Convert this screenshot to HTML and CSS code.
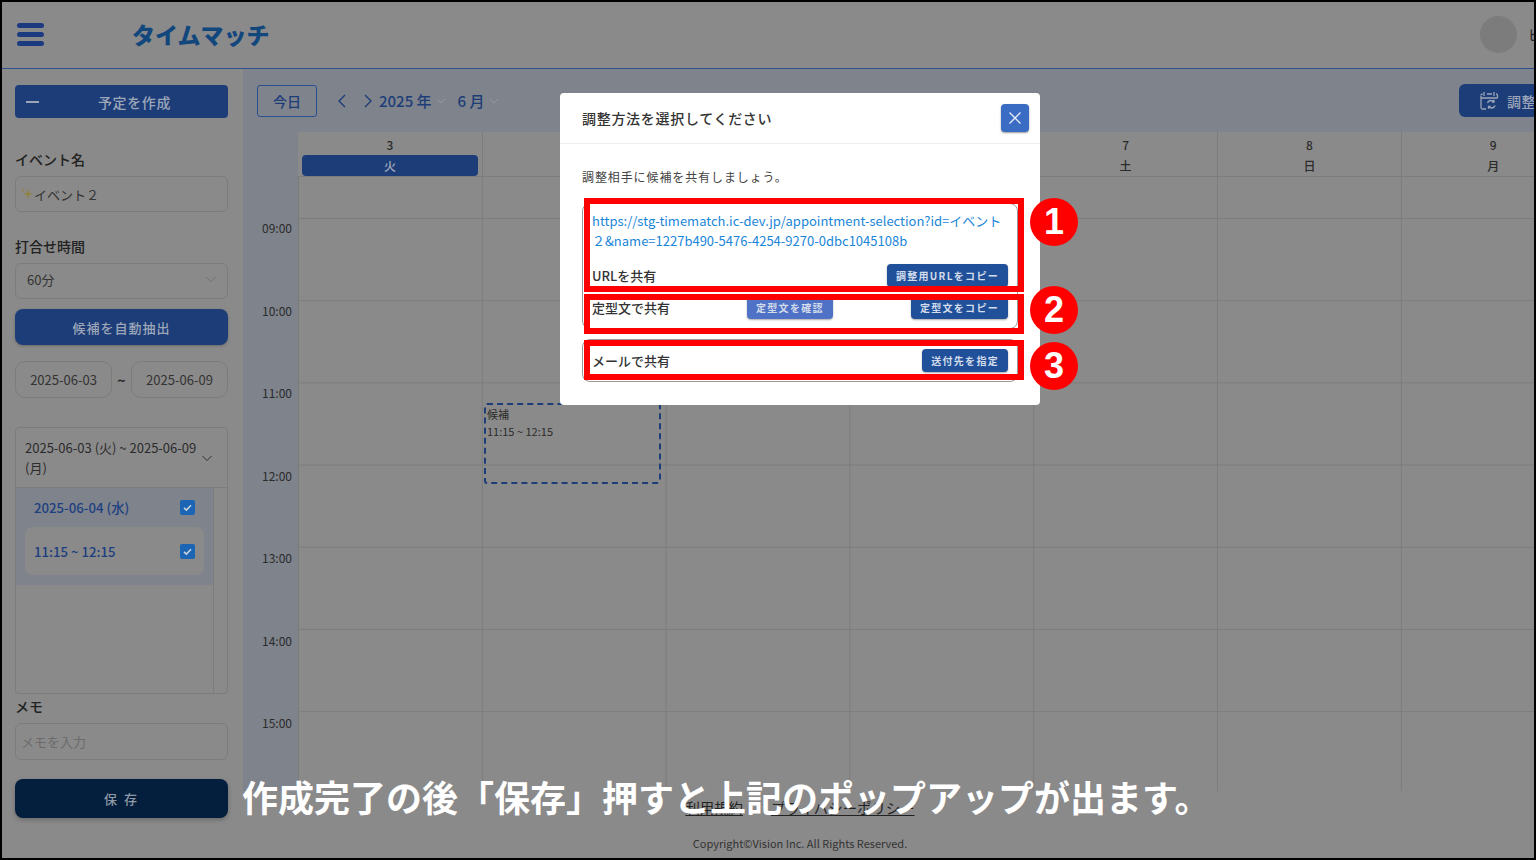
FILE: index.html
```html
<!DOCTYPE html>
<html lang="ja">
<head>
    <meta charset="utf-8">
    <title>タイムマッチ</title>
    <link rel="stylesheet" href="styles.css">
</head>
<body>
<div class="frame">
    <header class="topbar">
        <div class="burger"><span></span><span></span><span></span></div>
        <div class="logo">タイムマッチ</div>
        <div class="user"><div class="avatar"></div><span>ビジョン</span></div>
    </header>

    <div class="content">
        <aside class="sidebar">
            <button class="btn create"><span class="dash"></span>予定を作成</button>

            <label class="label first">イベント名</label>
            <div class="field event-name">
                <svg class="sparkle" width="14" height="14" viewBox="0 0 14 14"><path d="M8 2l1.200 3.800L13 7 9.200 8.200 8 12 6.800 8.200 3 7l3.800-1.200z" fill="#8f8346"/><path d="M3 1l.6 1.400L5 3l-1.400.6L3 5l-.6-1.400L1 3l1.400-.6z" fill="#8f8346"/></svg>
                イベント２
            </div>

            <label class="label second">打合せ時間</label>
            <div class="field select">60分
                <svg width="12" height="12" viewBox="0 0 12 12"><path d="M1.500 4l4.500 4.500L10.500 4" fill="none" stroke="#6f6f6f"/></svg>
            </div>

            <button class="btn auto">候補を自動抽出</button>

            <div class="range">
                <div class="field date">2025-06-03</div>
                <span class="tilde">~</span>
                <div class="field date">2025-06-09</div>
            </div>

            <div class="accordion">
                <div class="acc-head">
                    <span>2025-06-03 (火) ~ 2025-06-09 (月)</span>
                    <svg width="12" height="12" viewBox="0 0 12 12"><path d="M1.500 4l4.500 4.500L10.500 4" fill="none" stroke="#333"/></svg>
                </div>
                <div class="acc-body">
                    <div class="acc-list">
                        <div class="acc-day">
                            <div class="acc-row day-row">2025-06-04 (水)
                                <svg class="check" width="15" height="15" viewBox="0 0 15 15"><rect width="15" height="15" rx="2" fill="#1c65b5"/><path d="M4 7.800l2.400 2.300L11 5.200" fill="none" stroke="#c9d2dc" stroke-width="1.600"/></svg>
                            </div>
                            <div class="acc-row slot-row">11:15 ~ 12:15
                                <svg class="check" width="15" height="15" viewBox="0 0 15 15"><rect width="15" height="15" rx="2" fill="#1c65b5"/><path d="M4 7.800l2.400 2.300L11 5.200" fill="none" stroke="#c9d2dc" stroke-width="1.600"/></svg>
                            </div>
                        </div>
                    </div>
                    <div class="acc-scroll"></div>
                </div>
            </div>

            <label class="label memo-label">メモ</label>
            <div class="field memo">メモを入力</div>

            <button class="btn save">保 存</button>
        </aside>

        <main class="main">
            <div class="toolbar">
                <button class="today">今日</button>
                <svg class="arrow" width="12" height="16" viewBox="0 0 12 16"><path d="M9 2L3 8l6 6" fill="none" stroke="#1d3d78" stroke-width="1.400"/></svg>
                <svg class="arrow next" width="12" height="16" viewBox="0 0 12 16"><path d="M3 2l6 6-6 6" fill="none" stroke="#1d3d78" stroke-width="1.400"/></svg>
                <span class="ym">2025 年</span>
                <svg class="caret" width="10" height="10" viewBox="0 0 10 10"><path d="M1 3l4 4 4-4" fill="none" stroke="#8e98a8"/></svg>
                <span class="ym month">6 月</span>
                <svg class="caret" width="10" height="10" viewBox="0 0 10 10"><path d="M1 3l4 4 4-4" fill="none" stroke="#8e98a8"/></svg>
                <button class="btn adjust">
                    <svg width="20" height="20" viewBox="0 0 20 20" fill="none" stroke="#9aa5b8" stroke-width="1.300"><path d="M8 3h5M5 1v4M15 1v4M2 4.500C2 3.500 2.500 3 3.500 3M17 3c1 0 1.500.5 1.500 1.500V7M2 5v11.500c0 1 .5 1.500 1.500 1.500H7M2 7h16.500M8.500 12c.5-1.500 2-2.500 3.500-2.500 1.300 0 2.200.5 3 1.500M15 8.800V11h-2.200M16 14.500c-.5 1.500-2 2.500-3.500 2.500-1.300 0-2.200-.5-3-1.500M9.500 17.700v-2.200h2.200"/></svg>
                    調整方法
                </button>
            </div>

            <div class="week-head">
                <div class="corner"></div>
                <div class="day today-col"><span>3</span><b class="pill">火</b></div>
                <div class="day"><span>4</span><b>水</b></div>
                <div class="day"><span>5</span><b>木</b></div>
                <div class="day"><span>6</span><b>金</b></div>
                <div class="day"><span>7</span><b>土</b></div>
                <div class="day"><span>8</span><b>日</b></div>
                <div class="day"><span>9</span><b>月</b></div>
            </div>

            <div class="week-body">
                <div class="times">
                    <div class="time">09:00</div>
                    <div class="time">10:00</div>
                    <div class="time">11:00</div>
                    <div class="time">12:00</div>
                    <div class="time">13:00</div>
                    <div class="time">14:00</div>
                    <div class="time">15:00</div>
                </div>
                <div class="slots">
                    <div class="candidate">候補<br>11:15 ~ 12:15</div>
                </div>
            </div>

            <footer class="footer">
                <div class="links"><a>利用規約</a><a>プライバシーポリシー</a></div>
                <div class="copy">Copyright©Vision Inc. All Rights Reserved.</div>
            </footer>
        </main>
    </div>

    <div class="overlay">
        <div class="modal">
            <div class="modal-head">
                <h2>調整方法を選択してください</h2>
                <button class="close">
                    <svg width="14" height="14" viewBox="0 0 14 14"><path d="M1.500 1.500l11 11M12.500 1.500l-11 11" stroke="#e6ecf7" stroke-width="1.300"/></svg>
                </button>
            </div>
            <div class="modal-body">
                <p class="lead">調整相手に候補を共有しましょう。</p>
                <div class="share-group">
                    <div class="card card-url">
                        <div class="url">https://stg-timematch.ic-dev.jp/appointment-selection?id=イベント２&amp;name=1227b490-5476-4254-9270-0dbc1045108b</div>
                        <div class="card-row">
                            <span>URLを共有</span>
                            <button class="mini">調整用URLをコピー</button>
                        </div>
                    </div>
                    <div class="card card-text">
                        <div class="card-row">
                            <span>定型文で共有</span>
                            <button class="mini light">定型文を確認</button>
                            <button class="mini">定型文をコピー</button>
                        </div>
                    </div>
                </div>
                <div class="card card-mail">
                    <div class="card-row">
                        <span>メールで共有</span>
                        <button class="mini">送付先を指定</button>
                    </div>
                </div>
            </div>
            <div class="mark box1"></div>
            <div class="mark box2"></div>
            <div class="mark box3"></div>
            <div class="num num1">1</div>
            <div class="num num2">2</div>
            <div class="num num3">3</div>
        </div>
    </div>

    <div class="caption">作成完了の後「保存」押すと上記のポップアップが出ます。</div>
</div>
</body>
</html>
```

FILE: styles.css
```css
* {
    box-sizing: border-box;
}

html, body {
    margin: 0;
    height: 100%;
}

body {
    font-family: "Noto Sans CJK JP", "Noto Sans", sans-serif;
    color: #2b2b2b;
    background-color: #000;
    overflow: hidden;
}

button {
    font-family: inherit;
    border: none;
    padding: 0;
}

.frame {
    position: relative;
    width: 1536px;
    height: 860px;
    border: 2px solid #000;
    background-color: #8a8a8a;
    overflow: hidden;
}

/* top bar */
.topbar {
    display: flex;
    align-items: center;
    height: 67px;
    border-bottom: 1px solid #2f4f8f;
    padding-left: 15px;
    padding-bottom: 2px;
}

.burger {
    display: flex;
    flex-direction: column;
    gap: 4px;
    width: 27px;
}

.burger span {
    height: 5px;
    border-radius: 3px;
    background-color: #1c3a80;
}

.logo {
    margin-left: 88px;
    font-size: 23px;
    font-weight: 900;
    color: #12477e;
}

.user {
    display: flex;
    align-items: center;
    gap: 11px;
    margin-left: auto;
    margin-right: -50px;
    font-size: 14px;
    color: #222;
    white-space: nowrap;
}

.avatar {
    width: 37px;
    height: 37px;
    border-radius: 50%;
    background-color: #7c7c7c;
}

.content {
    display: flex;
    height: 789px;
}

/* left column */
.sidebar {
    flex: 0 0 241px;
    padding: 16px 15px 0 13px;
}

.btn {
    display: block;
    position: relative;
    width: 100%;
    color: #9ca6b8;
    background-color: #1d3d78;
    font-size: 14px;
    font-weight: 500;
    letter-spacing: .6px;
    border-radius: 4px;
}

.create {
    height: 33px;
    padding-left: 26px;
}

.dash {
    position: absolute;
    left: 11px;
    top: 16px;
    width: 13px;
    height: 2px;
    background-color: #9ca6b8;
}

.label {
    display: block;
    font-size: 14px;
    font-weight: 500;
    line-height: 20px;
    color: #222;
}

.first {
    margin-top: 31px;
}

.second {
    margin-top: 24px;
}

.field {
    display: flex;
    align-items: center;
    border: 1px solid #7c7c7c;
    border-radius: 6px;
    font-size: 13px;
    color: #333;
}

.event-name {
    height: 36px;
    margin-top: 7px;
    padding-left: 4px;
    font-size: 13px;
}

.sparkle {
    flex: none;
}

.select {
    justify-content: space-between;
    height: 36px;
    margin-top: 7px;
    padding: 0 10px 4px 11px;
}

.auto {
    height: 36px;
    margin-top: 10px;
    border-radius: 8px;
    letter-spacing: 1px;
    font-size: 13px;
    box-shadow: 0 1px 3px #6a6a6a;
}

.range {
    display: flex;
    align-items: center;
    justify-content: space-between;
    margin-top: 16px;
}

.date {
    justify-content: center;
    width: 97px;
    height: 37px;
    border-radius: 10px;
}

.tilde {
    font-weight: 700;
    font-size: 14px;
}

.accordion {
    height: 267px;
    margin-top: 29px;
    border: 1px solid #7c7c7c;
    border-radius: 4px;
}

.acc-head {
    display: flex;
    align-items: center;
    justify-content: space-between;
    height: 60px;
    padding: 0 14px 0 9px;
    border-bottom: 1px solid #7c7c7c;
    font-size: 13px;
    line-height: 20px;
}

.acc-head span {
    flex: none;
    width: 175px;
}

.acc-body {
    display: flex;
    height: 205px;
}

.acc-list {
    flex: 1;
}

.acc-scroll {
    width: 14px;
    border-left: 1px solid #7c7c7c;
}

.acc-day {
    height: 97px;
    padding: 0 9px;
    background-color: #7e838c;
}

.acc-row {
    display: flex;
    align-items: center;
    justify-content: space-between;
    font-size: 13.2px;
    font-weight: 500;
    color: #1d3f80;
}

.day-row {
    height: 39px;
    padding: 0 9px;
}

.slot-row {
    height: 48px;
    padding: 0 9px;
    border-radius: 8px;
    background-color: #8a8a8a;
}

.check {
    flex: none;
}

.memo-label {
    margin-top: 1px;
    line-height: 22px;
}

.memo {
    height: 37px;
    margin-top: 6px;
    padding-left: 5px;
    color: #6b6b6b;
}

.save {
    height: 39px;
    margin-top: 19px;
    font-size: 13px;
    letter-spacing: 2px;
    color: #8f99a6;
    background-color: #031f3d;
    border-radius: 8px;
    box-shadow: 0 2px 4px #6a6a6a;
}

/* calendar */
.main {
    flex: 1;
    min-width: 0;
    background-color: #7e838c;
}

.toolbar {
    display: flex;
    align-items: center;
    height: 63px;
    padding-left: 14px;
    white-space: nowrap;
}

.today {
    width: 60px;
    height: 32px;
    margin-top: 1px;
    color: #1d3d78;
    font-size: 14px;
    font-weight: 500;
    background: none;
    border: 1px solid #2a4f90;
    border-radius: 3px;
}

.arrow {
    margin-left: 19px;
}

.next {
    margin-left: 14px;
    margin-right: 5px;
}

.ym {
    font-size: 15px;
    font-weight: 500;
    color: #1d3d78;
}

.caret {
    margin-left: 4px;
}

.month {
    margin-left: 12px;
}

.adjust {
    display: flex;
    align-items: center;
    gap: 8px;
    flex: none;
    width: 130px;
    height: 33px;
    margin-left: auto;
    margin-right: -55px;
    padding-left: 20px;
    border-radius: 6px;
}

.week-head {
    display: grid;
    grid-template-columns: 55px repeat(7, 183.8px);
    height: 45px;
}

.corner {
    background-color: #7e838c;
}

.day {
    display: flex;
    flex-direction: column;
    align-items: center;
    padding-top: 3px;
    font-size: 12px;
    font-weight: 500;
    line-height: 20px;
    background-color: #8a8a8a;
    border-left: 1px solid #7c7c7c;
    border-bottom: 1px solid #7c7c7c;
}

.day b {
    display: block;
    font-weight: 500;
    line-height: 21px;
}

.today-col {
    border-left: none;
}

.day .pill {
    align-self: stretch;
    margin: 0 4px;
    border-radius: 4px;
    text-align: center;
    color: #a0aabb;
    background-color: #1d3d78;
}

.week-body {
    display: flex;
    height: 614px;
}

.times {
    flex: 0 0 55px;
    padding-top: 42px;
}

.time {
    height: 82.5px;
    padding-right: 6px;
    font-size: 12px;
    line-height: 18px;
    text-align: right;
    color: #2b2b2b;
}

.slots {
    flex: 1;
    position: relative;
    background-color: #8a8a8a;
    background-image: linear-gradient(#7c7c7c 1px, transparent 1px), linear-gradient(90deg, #7c7c7c 1px, transparent 1px);
    background-size: 100% 82.2px, 183.8px 100%;
    background-position: 0 41px, 0 0;
}

.candidate {
    position: absolute;
    left: 186px;
    top: 226px;
    width: 177px;
    height: 81px;
    padding: 1px 0 0 1px;
    border: 2px dashed #1d3d78;
    border-radius: 3px;
    font-size: 11px;
    line-height: 17px;
}

.footer {
    height: 67px;
    padding-right: 177px;
    background-color: #8a8a8a;
    text-align: center;
}

.links {
    height: 43px;
    padding-top: 6px;
    font-size: 14.4px;
    color: #222;
}

.links a {
    margin: 0 14px;
    text-decoration: underline;
}

.copy {
    font-size: 11px;
    line-height: 18px;
    color: #333;
}

/* popup */
.overlay {
    position: absolute;
    left: 558px;
    top: 91px;
}

.modal {
    position: relative;
    width: 480px;
    height: 312px;
    background-color: #fff;
    border-radius: 4px;
}

.modal-head {
    display: flex;
    align-items: center;
    justify-content: space-between;
    height: 51px;
    padding: 0 11px 0 22px;
    border-bottom: 1px solid #eee;
}

.modal-head h2 {
    margin: 0;
    font-size: 14px;
    font-weight: 500;
    letter-spacing: .7px;
    color: #333;
}

.close {
    display: flex;
    align-items: center;
    justify-content: center;
    width: 28px;
    height: 28px;
    background-color: #3a6cc4;
    border-radius: 4px;
    box-shadow: 0 1px 2px #999;
}

.modal-body {
    padding: 23px 22px 0;
}

.lead {
    margin: 0 0 17px;
    font-size: 12px;
    line-height: 19px;
    letter-spacing: .9px;
    color: #444;
}

.share-group {
    border: 1px solid #999;
    border-radius: 8px;
    margin-bottom: 10px;
}

.card {
    padding: 0 9px;
    font-size: 13px;
    font-weight: 500;
    color: #333;
}

.card-url {
    height: 86px;
    padding-top: 7px;
}

.url {
    height: 53px;
    font-size: 13px;
    font-weight: 400;
    line-height: 20px;
    color: #1a86d8;
    word-break: break-all;
}

.card-row {
    display: flex;
    align-items: center;
    justify-content: space-between;
}

.card-text {
    height: 38px;
    padding-top: 6px;
}

.card-mail {
    height: 43px;
    padding-top: 9px;
    border: 1px solid #999;
    border-radius: 8px;
}

.mini {
    height: 23px;
    padding: 0 9px;
    color: #d3dceb;
    font-size: 10px;
    font-weight: 700;
    letter-spacing: 1.300px;
    background-color: #20509a;
    border-radius: 4px;
    box-shadow: 0 1px 2px #aaa;
}

.mini.light {
    background-color: #4f72c6;
    margin-left: 77px;
    margin-right: auto;
}

.mark {
    position: absolute;
    left: 24px;
    width: 440px;
    border: 6px solid #f00;
}

.box1 {
    top: 105px;
    height: 94px;
}

.box2 {
    top: 201px;
    height: 40px;
}

.box3 {
    top: 247px;
    height: 40px;
}

.num {
    position: absolute;
    left: 470px;
    width: 48px;
    height: 48px;
    border-radius: 50%;
    background-color: #f00;
    color: #fff;
    font-family: "Liberation Sans", sans-serif;
    font-size: 36px;
    font-weight: 700;
    line-height: 48px;
    text-align: center;
}

.num1 {
    top: 105px;
}

.num2 {
    top: 193px;
}

.num3 {
    top: 249px;
}

.caption {
    position: absolute;
    left: 240px;
    top: 768px;
    font-size: 36px;
    font-weight: 700;
    line-height: 52px;
    color: #fff;
    white-space: nowrap;
}
```
